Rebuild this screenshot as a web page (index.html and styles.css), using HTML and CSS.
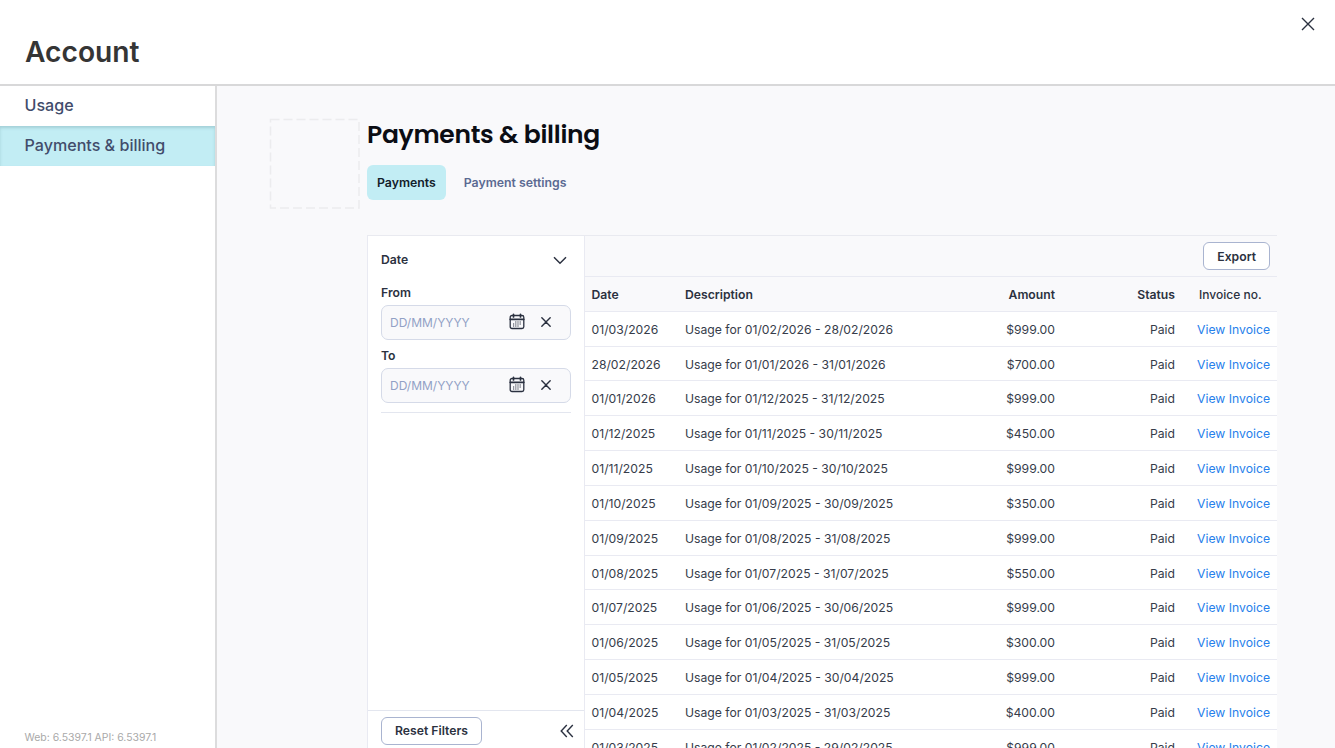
FILE: index.html
```
<!DOCTYPE html>
<html lang="en">
<head>
  <meta charset="UTF-8">
  <meta name="viewport" content="width=device-width, initial-scale=1.0">
  <title>Account</title>
  <link rel="stylesheet" href="styles.css">
</head>
<body>
  <svg class="sprite" aria-hidden="true">
    <symbol id="calendar" viewBox="0 0 16 18">
      <rect x="1.2" y="2.5" width="13.6" height="13" rx="1.8" fill="none" stroke="currentColor" stroke-width="1.3"/>
      <path d="M1.2 6.3h13.6M4.5 1.3v2.6M11.5 1.3v2.6" fill="none" stroke="currentColor" stroke-width="1.7" stroke-linecap="round"/>
      <path d="M6.2 9h6.4M4 11h8.6M4 13h6" fill="none" stroke="currentColor" stroke-width="1" stroke-dasharray="1.2 1"/>
    </symbol>
    <symbol id="cross" viewBox="0 0 12 12">
      <path d="M1 1l10 10M11 1L1 11" fill="none" stroke="currentColor" stroke-width="1.7" stroke-linecap="round"/>
    </symbol>
  </svg>

  <header class="header">
    <h1 class="header-title">Account</h1>
    <button class="icon-button close" aria-label="Close">
      <svg width="14" height="14"><path d="M1 1l12 12M13 1L1 13" fill="none" stroke="currentColor" stroke-width="1.4"/></svg>
    </button>
  </header>

  <div class="layout">
    <aside class="sidebar">
      <nav>
        <a class="nav-item">Usage</a>
        <a class="nav-item active">Payments &amp; billing</a>
      </nav>
      <div class="version">Web: 6.5397.1 API: 6.5397.1</div>
    </aside>

    <main class="content">
      <div class="page-head">
        <svg class="logo-box" width="92" height="92"><rect x="1.5" y="1.5" width="88.5" height="88.5" fill="none" stroke="#ececee" stroke-width="1.5" stroke-dasharray="9 4"/></svg>
        <div>
          <h2 class="page-title">Payments &amp; billing</h2>
          <div class="tabs">
            <a class="tab active">Payments</a>
            <a class="tab">Payment settings</a>
          </div>
        </div>
      </div>

      <div class="panel">
        <section class="filters">
          <div class="filter-body">
            <div class="filter-head">
              <span>Date</span>
              <svg width="14" height="9"><path d="M1 1.2l6 6 6-6" fill="none" stroke="currentColor" stroke-width="1.5"/></svg>
            </div>
            <div class="label">From</div>
            <div class="date-field">
              <span class="placeholder">DD/MM/YYYY</span>
              <svg class="calendar" width="16" height="18"><use href="#calendar"/></svg>
              <svg class="clear" width="10" height="10"><use href="#cross"/></svg>
            </div>
            <div class="label">To</div>
            <div class="date-field">
              <span class="placeholder">DD/MM/YYYY</span>
              <svg class="calendar" width="16" height="18"><use href="#calendar"/></svg>
              <svg class="clear" width="10" height="10"><use href="#cross"/></svg>
            </div>
          </div>
          <div class="filter-foot">
            <button class="button">Reset Filters</button>
            <svg width="14" height="14"><path d="M6.8 1L1.2 7l5.6 6M12.8 1L7.2 7l5.6 6" fill="none" stroke="currentColor" stroke-width="1.4"/></svg>
          </div>
        </section>

        <section class="results">
          <div class="toolbar"><button class="button export">Export</button></div>
          <div class="row row-head"><span>Date</span><span>Description</span><span class="right">Amount</span><span class="right">Status</span><span class="invoice-head">Invoice no.</span></div>
          <div class="row"><span>01/03/2026</span><span>Usage for 01/02/2026 - 28/02/2026</span><span class="right">$999.00</span><span class="right">Paid</span><a class="link">View Invoice</a></div>
          <div class="row"><span>28/02/2026</span><span>Usage for 01/01/2026 - 31/01/2026</span><span class="right">$700.00</span><span class="right">Paid</span><a class="link">View Invoice</a></div>
          <div class="row"><span>01/01/2026</span><span>Usage for 01/12/2025 - 31/12/2025</span><span class="right">$999.00</span><span class="right">Paid</span><a class="link">View Invoice</a></div>
          <div class="row"><span>01/12/2025</span><span>Usage for 01/11/2025 - 30/11/2025</span><span class="right">$450.00</span><span class="right">Paid</span><a class="link">View Invoice</a></div>
          <div class="row"><span>01/11/2025</span><span>Usage for 01/10/2025 - 30/10/2025</span><span class="right">$999.00</span><span class="right">Paid</span><a class="link">View Invoice</a></div>
          <div class="row"><span>01/10/2025</span><span>Usage for 01/09/2025 - 30/09/2025</span><span class="right">$350.00</span><span class="right">Paid</span><a class="link">View Invoice</a></div>
          <div class="row"><span>01/09/2025</span><span>Usage for 01/08/2025 - 31/08/2025</span><span class="right">$999.00</span><span class="right">Paid</span><a class="link">View Invoice</a></div>
          <div class="row"><span>01/08/2025</span><span>Usage for 01/07/2025 - 31/07/2025</span><span class="right">$550.00</span><span class="right">Paid</span><a class="link">View Invoice</a></div>
          <div class="row"><span>01/07/2025</span><span>Usage for 01/06/2025 - 30/06/2025</span><span class="right">$999.00</span><span class="right">Paid</span><a class="link">View Invoice</a></div>
          <div class="row"><span>01/06/2025</span><span>Usage for 01/05/2025 - 31/05/2025</span><span class="right">$300.00</span><span class="right">Paid</span><a class="link">View Invoice</a></div>
          <div class="row"><span>01/05/2025</span><span>Usage for 01/04/2025 - 30/04/2025</span><span class="right">$999.00</span><span class="right">Paid</span><a class="link">View Invoice</a></div>
          <div class="row"><span>01/04/2025</span><span>Usage for 01/03/2025 - 31/03/2025</span><span class="right">$400.00</span><span class="right">Paid</span><a class="link">View Invoice</a></div>
          <div class="row"><span>01/03/2025</span><span>Usage for 01/02/2025 - 29/02/2025</span><span class="right">$999.00</span><span class="right">Paid</span><a class="link">View Invoice</a></div>
        </section>
      </div>
    </main>
  </div>
</body>
</html>
```
FILE: styles.css
```
* {
  box-sizing: border-box;
}

body {
  margin: 0;
  height: 100vh;
  display: flex;
  flex-direction: column;
  overflow: hidden;
  background: #ffffff;
  font-family: Inter, sans-serif;
  font-size: 12.2px;
  color: #2b3140;
}

.sprite {
  display: none;
}

svg {
  display: block;
  flex-shrink: 0;
}

.header {
  height: 86px;
  flex-shrink: 0;
  display: flex;
  justify-content: space-between;
  align-items: flex-start;
  padding: 17px 20px 0 25px;
  border-bottom: 2px solid #d8d8d9;
}

.header-title {
  margin: 17px 0 0;
  font-size: 28.2px;
  line-height: 36px;
  font-weight: 600;
  color: #353535;
}

.icon-button {
  padding: 0;
  border: none;
  background: none;
  color: #2b3140;
}

.layout {
  flex: 1;
  min-height: 0;
  display: flex;
}

.sidebar {
  width: 217px;
  flex-shrink: 0;
  display: flex;
  flex-direction: column;
  justify-content: space-between;
  border-right: 2px solid #dcdcdd;
}

.nav-item {
  display: block;
  height: 40px;
  padding-left: 24.5px;
  font-size: 16.1px;
  line-height: 39px;
  font-weight: 500;
  color: #414c6b;
}

.nav-item.active {
  background: #c2edf4;
  box-shadow: inset 0 2px 3px rgba(60, 110, 120, 0.22);
}

.version {
  padding: 0 0 3px 24.5px;
  font-size: 10.45px;
  line-height: 15px;
  color: #a9a9a9;
}

.content {
  flex: 1;
  min-width: 0;
  display: flex;
  flex-direction: column;
  padding: 32px 58px 0 52px;
  background: #f9f9fb;
}

.page-head {
  display: flex;
  height: 117px;
  gap: 6px;
}

.page-title {
  margin: 0;
  font-family: Poppins, Inter, sans-serif;
  font-size: 25px;
  line-height: 33px;
  font-weight: 600;
  letter-spacing: -0.3px;
  color: #0b0d14;
}

.tabs {
  display: flex;
  gap: 8px;
  margin-top: 14px;
}

.tab {
  height: 35px;
  padding: 0 10px;
  border-radius: 6px;
  font-size: 12.3px;
  line-height: 36px;
  font-weight: 600;
  color: #5b6a92;
}

.tab.active {
  background: #c2edf4;
  color: #12202a;
}

.panel {
  flex: 1;
  min-height: 0;
  display: flex;
  margin-left: 98px;
  border-top: 1px solid #e9eaf0;
}

.filters {
  width: 217px;
  flex-shrink: 0;
  display: flex;
  flex-direction: column;
  justify-content: space-between;
  background: #ffffff;
  border-left: 1px solid #e9eaf2;
}

.filter-body {
  margin: 0 13px;
  padding-bottom: 9px;
  border-bottom: 1px solid #e3e6ef;
}

.filter-head {
  height: 48px;
  display: flex;
  justify-content: space-between;
  align-items: center;
  padding-right: 4px;
  font-weight: 600;
}

.filter-head span {
  padding-bottom: 1px;
}

.label {
  height: 21px;
  line-height: 17px;
  font-weight: 600;
}

.date-field {
  height: 35px;
  display: flex;
  align-items: center;
  padding: 0 19px 1px 8px;
  border: 1px solid #d5dae8;
  border-radius: 7px;
  background: #f9f9fb;
}

.date-field + .label {
  margin-top: 7px;
}

.placeholder {
  flex: 1;
  font-size: 12px;
  color: #92a1c6;
}

.date-field .clear {
  margin-left: 16px;
}

.filter-foot {
  height: 38px;
  display: flex;
  justify-content: space-between;
  align-items: flex-start;
  padding: 6px 10px 0 13px;
  border-top: 1px solid #e3e6ef;
}

.filter-foot svg {
  margin-top: 7px;
}

.button {
  height: 28px;
  padding: 0 13px;
  border: 1px solid #a9b4d0;
  border-radius: 6px;
  background: #ffffff;
  font-family: inherit;
  font-size: 12.2px;
  font-weight: 600;
  color: #2b3140;
}

.filter-foot .button {
  padding-bottom: 1px;
}

.results {
  flex: 1;
  min-width: 0;
  overflow: hidden;
  border-left: 1px solid #e9eaf2;
}

.toolbar {
  height: 41px;
  display: flex;
  justify-content: flex-end;
  align-items: center;
  padding-right: 7px;
  border-bottom: 1px solid #e9eaf2;
}

.row {
  height: 34.83px;
  display: grid;
  grid-template-columns: 93.5px 1fr 120px 120px 95px;
  align-items: center;
  padding: 1px 7px 0 6.5px;
  border-bottom: 1px solid #e9eaf2;
  background: #ffffff;
  color: #363c4a;
}

.row-head {
  background: #f9f9fb;
  font-weight: 600;
  color: #2b3140;
}

.right {
  text-align: right;
}

.link {
  text-align: right;
  color: #2680eb;
}

.invoice-head {
  padding-left: 24px;
  font-size: 12px;
  font-weight: 500;
}
```
